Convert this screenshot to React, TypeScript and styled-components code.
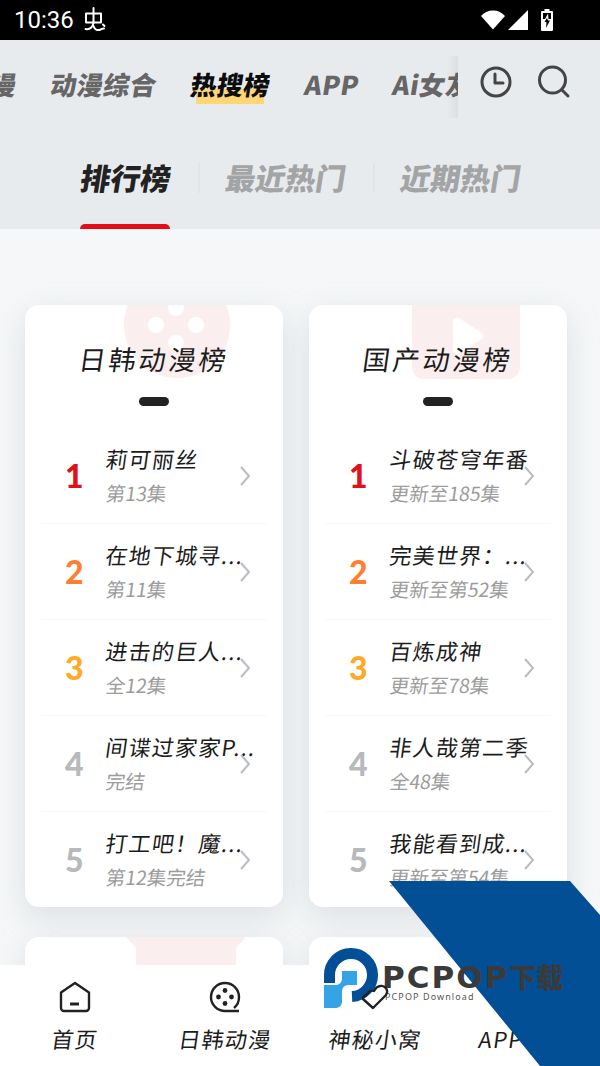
import React from "react";
import styled, { createGlobalStyle, css } from "styled-components";

const Global = createGlobalStyle`
  html, body { margin: 0; padding: 0; background: #f5f7f8; }
  * { box-sizing: border-box; }
`;

const FONT = `"Noto Sans CJK SC", "Noto Sans", sans-serif`;

const slant = (deg: number) => css`
  transform: skewX(-${deg}deg);
`;

const Page = styled.div`
  position: relative;
  width: 600px;
  height: 1066px;
  overflow: hidden;
  display: flex;
  flex-direction: column;
  font-family: ${FONT};
  background: #f5f7f8;
`;

const StatusBar = styled.div`
  height: 40px;
  flex: none;
  background: #000;
  color: #fff;
  display: flex;
  align-items: center;
  padding: 0 47px 0 14px;
  justify-content: space-between;
`;
const Clock = styled.div`
  display: flex;
  align-items: center;
  gap: 10px;
  font-family: Roboto, sans-serif;
  font-size: 24px;
`;
const StatusIcons = styled.div`
  display: flex;
  align-items: center;
  gap: 3px;
  margin-top: -1px;
`;
const BatteryIcon = styled.svg`
  margin-left: 10px;
`;

const Header = styled.header`
  height: 189px;
  flex: none;
  background: #e8ebee;
  display: flex;
  flex-direction: column;
`;
const TopRow = styled.div`
  display: flex;
  height: 84px;
  margin-top: 4px;
`;
const TopStrip = styled.div`
  width: 458px;
  flex: none;
  overflow: hidden;
  display: flex;
  align-items: center;
  gap: 34px;
  padding-bottom: 4px;
`;
const TopTab = styled.span<{ $active?: boolean; $first?: boolean }>`
  position: relative;
  flex: none;
  font-size: 26px;
  line-height: 36px;
  letter-spacing: 0.5px;
  font-weight: 900;
  color: ${(p) => (p.$active ? "#0c0c0c" : "#666")};
  margin-left: ${(p) => (p.$first ? "-36px" : "0")};
  &::before {
    content: "";
    display: ${(p) => (p.$active ? "block" : "none")};
    position: absolute;
    left: 5px;
    right: 7px;
    bottom: -2px;
    height: 15px;
    background: #fed673;
  }
`;
const TabLabel = styled.span`
  position: relative;
  display: inline-block;
  ${slant(9)}
`;
const TopIcons = styled.div`
  flex: 1;
  position: relative;
  display: flex;
  align-items: center;
  gap: 24px;
  padding: 0 0 8px 21px;
  &::before {
    content: "";
    position: absolute;
    left: -12px;
    top: 12px;
    bottom: 10px;
    width: 12px;
    background: linear-gradient(to right, rgba(0, 0, 0, 0), rgba(0, 0, 0, 0.05));
  }
`;

const SubRow = styled.div`
  flex: 1;
  display: flex;
  align-items: flex-start;
  padding: 26px 0 0 81px;
`;
const SubTab = styled.div`
  position: relative;
  flex: none;
  font-size: 30px;
  line-height: 46px;
  font-weight: 900;
  color: #a3a4a5;
`;
const SubLabel = styled.span`
  display: inline-block;
  ${slant(9)}
`;
const SubTabActive = styled(SubTab)`
  color: #222;
  &::after {
    content: "";
    position: absolute;
    left: -1px;
    right: 1px;
    top: 70px;
    height: 5px;
    border-radius: 6px 6px 0 0;
    background: #e60c16;
  }
`;
const SubDivider = styled.i`
  flex: none;
  width: 2px;
  height: 30px;
  margin: 9px 26px 0 27px;
  background: #e2e5e8;
`;

const Content = styled.main`
  flex: 1;
  min-height: 0;
  overflow: hidden;
  padding: 76px 33px 0 25px;
  display: grid;
  grid-template-columns: 258px 258px;
  grid-auto-rows: 602px;
  column-gap: 26px;
  row-gap: 30px;
`;
const Card = styled.section`
  position: relative;
  background: #fff;
  border-radius: 14px;
  box-shadow: 0 10px 30px rgba(180, 187, 194, 0.38);
  overflow: hidden;
  padding: 0 16px;
`;
const CardDecor = styled.svg<{ $left: number }>`
  position: absolute;
  left: ${(p) => p.$left}px;
  top: 0;
`;
const CardTitle = styled.h2`
  position: relative;
  margin: 0;
  padding: 34px 0 0 5px;
  height: 74px;
  text-align: center;
  font-size: 27px;
  line-height: 40px;
  font-weight: 400;
  letter-spacing: 3px;
  color: #1c1c1c;
  ${slant(8)}
`;
const TitleDash = styled.div`
  position: relative;
  width: 30px;
  height: 9px;
  margin: 18px auto 22px;
  border-radius: 5px;
  background: #222;
`;
const Row = styled.div<{ $last?: boolean }>`
  display: flex;
  align-items: center;
  height: 96px;
  border-bottom: ${(p) => (p.$last ? "none" : "1px solid #f7f8f8")};
  position: relative;
`;
const Rank = styled.div<{ $color: string }>`
  width: 65px;
  flex: none;
  padding-left: 24px;
  font-family: Lato, sans-serif;
  font-size: 32px;
  font-weight: 900;
  line-height: 36px;
  color: ${(p) => p.$color};
`;
const RowText = styled.div`
  width: 155px;
  flex: none;
  padding-bottom: 3px;
`;
const Name = styled.div`
  font-size: 22px;
  line-height: 32px;
  font-weight: 400;
  letter-spacing: 1.2px;
  color: #1c1c1c;
  white-space: nowrap;
  transform-origin: left center;
  ${slant(8)}
`;
const Sub = styled.div`
  margin-top: 5px;
  font-size: 19.5px;
  line-height: 28px;
  color: #9c9c9c;
  white-space: nowrap;
  transform-origin: left center;
  ${slant(8)}
`;
const Chevron = styled.svg`
  position: absolute;
  right: 16px;
  top: 38px;
`;

const BottomNav = styled.nav`
  height: 101px;
  flex: none;
  position: relative;
  background: #fff;
  display: grid;
  grid-template-columns: repeat(4, 150px);
`;
const NavItem = styled.div`
  display: flex;
  flex-direction: column;
  align-items: center;
  padding-top: 16px;
  gap: 9px;
`;
const NavIcon = styled.svg`
  display: block;
  position: relative;
  z-index: 2;
`;
const NavLabel = styled.span<{ $pad?: number }>`
  display: inline-block;
  font-size: 22px;
  line-height: 32px;
  font-weight: 400;
  letter-spacing: 1.2px;
  color: #1c1c1c;
  margin-right: ${(p) => p.$pad ?? 0}px;
  ${slant(8)}
`;

const Watermark = styled.div`
  position: absolute;
  z-index: 1;
  left: 320px;
  top: 881px;
  width: 280px;
  height: 185px;
  pointer-events: none;
`;
const WatermarkBand = styled.svg`
  position: absolute;
  left: 0;
  top: 0;
`;
const WatermarkLogo = styled.svg`
  position: absolute;
  left: 4px;
  top: 67px;
`;
const WatermarkName = styled.div`
  position: absolute;
  left: 62px;
  top: 78px;
  font-family: "DejaVu Sans", sans-serif;
  font-weight: 700;
  font-size: 31px;
  line-height: 36px;
  letter-spacing: 2px;
  color: #3a3a3a;
  white-space: nowrap;
`;
const WatermarkCjk = styled.span`
  font-family: "Noto Sans CJK SC", sans-serif;
  font-weight: 900;
  font-size: 27px;
  letter-spacing: 0;
`;
const WatermarkSub = styled.div`
  position: absolute;
  left: 65px;
  top: 110px;
  font-family: "Noto Sans", sans-serif;
  font-size: 9px;
  line-height: 12px;
  letter-spacing: 1.1px;
  color: #555;
  white-space: nowrap;
`;

const RANK_COLORS = ["#e2101a", "#ff7f32", "#ffa928", "#b8b9ba", "#b8b9ba"];

const CARDS = [
  {
    title: "日韩动漫榜",
    decor: "reel",
    rows: [
      ["莉可丽丝", "第13集"],
      ["在地下城寻...", "第11集"],
      ["进击的巨人...", "全12集"],
      ["间谍过家家P...", "完结"],
      ["打工吧！魔...", "第12集完结"],
    ],
  },
  {
    title: "国产动漫榜",
    decor: "play",
    rows: [
      ["斗破苍穹年番", "更新至185集"],
      ["完美世界：...", "更新至第52集"],
      ["百炼成神", "更新至78集"],
      ["非人哉第二季", "全48集"],
      ["我能看到成...", "更新至第54集"],
    ],
  },
  { title: "", decor: "tv", rows: [] },
  { title: "", decor: "none", rows: [] },
];

function Decor({ kind }: { kind: string }) {
  if (kind === "reel")
    return (
      <CardDecor $left={99} width="106" height="74" viewBox="0 0 106 74">
        <circle cx="53" cy="20" r="53" fill="#fbeeee" />
        <g fill="#fff">
          <circle cx="52" cy="3" r="8" />
          <circle cx="32" cy="20" r="8" />
          <circle cx="72" cy="20" r="8" />
          <circle cx="52" cy="38" r="8" />
        </g>
      </CardDecor>
    );
  if (kind === "play")
    return (
      <CardDecor $left={103} width="108" height="74" viewBox="0 0 108 74">
        <path d="M0 0H108V62a12 12 0 0 1-12 12H12A12 12 0 0 1 0 62Z" fill="#fbeeee" />
        <path d="M41 16a4 4 0 0 1 6-3l23 15a4 4 0 0 1 0 6L47 48a4 4 0 0 1-6-3Z" fill="#fff" />
      </CardDecor>
    );
  if (kind === "tv")
    return (
      <CardDecor $left={101} width="120" height="30" viewBox="0 0 120 30">
        <path d="M0 0H120L110 11V30H10V11Z" fill="#fbeeee" />
      </CardDecor>
    );
  return null;
}

const Ico = { fill: "none", stroke: "#222", strokeWidth: 2.4 };

export default function App() {
  return (
    <Page>
      <Global />
      <StatusBar>
        <Clock>
          10:36
          <svg width="22" height="26" viewBox="0 0 22 26" fill="none" stroke="#fff" strokeWidth="2" strokeLinecap="round" strokeLinejoin="round">
            <path d="M2 6.500h15v9H2Z" />
            <path d="M9.500 1V15.500" />
            <path d="M9.500 15.500C9 20 6 23 1.500 22" />
            <path d="M9.500 19c1 3 3 4.500 5.500 4s3-2 5-1.500" />
            <path d="M19 17.500l1.500 1.500" />
          </svg>
        </Clock>
        <StatusIcons>
          <svg width="24" height="20" viewBox="0 0 24 20">
            <path d="M0 6C3 2.500 7 .5 12 .5S21 2.500 24 6L12 19.500Z" fill="#fff" />
          </svg>
          <svg width="20" height="20" viewBox="0 0 20 20">
            <path d="M20 0V20H0Z" fill="#fff" />
          </svg>
          <BatteryIcon width="12" height="22" viewBox="0 0 12 22">
            <path d="M3.500 0h5v2H11a1 1 0 0 1 1 1v18a1 1 0 0 1-1 1H1a1 1 0 0 1-1-1V3a1 1 0 0 1 1-1h2.500Z" fill="#fff" />
            <path d="M2 4h8v6H2Z" fill="#000" />
            <path d="M7 4.500L4 10h3.500Z" fill="#fff" />
            <path d="M6 9L3.500 13H5.500L5 19 9 11.500H7Z" fill="#000" />
          </BatteryIcon>
        </StatusIcons>
      </StatusBar>
      <Header>
        <TopRow>
          <TopStrip>
            <TopTab $first><TabLabel>动漫</TabLabel></TopTab>
            <TopTab><TabLabel>动漫综合</TabLabel></TopTab>
            <TopTab $active><TabLabel>热搜榜</TabLabel></TopTab>
            <TopTab><TabLabel>APP</TabLabel></TopTab>
            <TopTab><TabLabel>Ai女友</TabLabel></TopTab>
          </TopStrip>
          <TopIcons>
            <svg width="34" height="34" viewBox="0 0 34 34" fill="none" stroke="#444" strokeWidth="3" strokeLinecap="round" strokeLinejoin="round">
              <circle cx="17" cy="17" r="14" />
              <path d="M16 9v9h8" />
            </svg>
            <svg width="34" height="34" viewBox="0 0 34 34" fill="none" stroke="#444" strokeWidth="3" strokeLinecap="round">
              <circle cx="15.500" cy="15" r="13" />
              <path d="M25 25l6 6" />
            </svg>
          </TopIcons>
        </TopRow>
        <SubRow>
          <SubTabActive><SubLabel>排行榜</SubLabel></SubTabActive>
          <SubDivider />
          <SubTab><SubLabel>最近热门</SubLabel></SubTab>
          <SubDivider />
          <SubTab><SubLabel>近期热门</SubLabel></SubTab>
        </SubRow>
      </Header>
      <Content>
        {CARDS.map((c, i) => (
          <Card key={i}>
            <Decor kind={c.decor} />
            <CardTitle>{c.title}</CardTitle>
            {c.title && <TitleDash />}
            {c.rows.map(([n, s], j) => (
              <Row key={j} $last={j === 4}>
                <Rank $color={RANK_COLORS[j]}>{j + 1}</Rank>
                <RowText>
                  <Name>{n}</Name>
                  <Sub>{s}</Sub>
                </RowText>
                <Chevron width="12" height="20" viewBox="0 0 12 20" fill="none" stroke="#b9bcc2" strokeWidth="2">
                  <path d="M2 1l8 9-8 9" />
                </Chevron>
              </Row>
            ))}
          </Card>
        ))}
      </Content>
      <BottomNav>
        <NavItem>
          <NavIcon width="32" height="32" viewBox="0 0 32 32" {...Ico} strokeLinejoin="round">
            <path d="M2 11.500L16 2l14 9.500V27a3 3 0 0 1-3 3H5a3 3 0 0 1-3-3Z" />
            <path d="M11 23h9" strokeWidth="3" />
          </NavIcon>
          <NavLabel>首页</NavLabel>
        </NavItem>
        <NavItem>
          <NavIcon width="32" height="32" viewBox="0 0 32 32" {...Ico}>
            <path d="M30 30H16A14 14 0 1 1 30 16a14 14 0 0 1-5 11" />
            <g fill="#222" stroke="none">
              <circle cx="16" cy="9.500" r="2.400" />
              <circle cx="9.500" cy="16" r="2.400" />
              <circle cx="22.500" cy="16" r="2.400" />
              <circle cx="16" cy="22.500" r="2.400" />
            </g>
          </NavIcon>
          <NavLabel>日韩动漫</NavLabel>
        </NavItem>
        <NavItem>
          <NavIcon width="32" height="32" viewBox="0 0 32 32" {...Ico} strokeLinejoin="round">
            <path d="M4 18l10 9 13-13c3-5-1-10-6-9-3 .5-5 3-6 5-2-1-5 0-7 3l-4 3.500Z" />
          </NavIcon>
          <NavLabel>神秘小窝</NavLabel>
        </NavItem>
        <NavItem>
          <NavIcon width="32" height="32" viewBox="0 0 32 32" />
          <NavLabel $pad={48}>APP</NavLabel>
        </NavItem>
      </BottomNav>
      <Watermark>
        <WatermarkBand width="280" height="185" viewBox="0 0 280 185">
          <path d="M69 0H250L280 34V185H220Z" fill="#034f96" />
        </WatermarkBand>
        <WatermarkLogo width="56" height="62" viewBox="0 0 56 62">
          <path d="M5.500 35V27A21.500 21.500 0 1 1 28 48.500" fill="none" stroke="#034f96" strokeWidth="11" />
          <path d="M18 23H33V37H24a6 6 0 0 0-6 6V54a6 6 0 0 1-6 6H0V37H12a6 6 0 0 0 6-6Z" fill="#35a4e6" />
        </WatermarkLogo>
        <WatermarkName>PCPOP<WatermarkCjk>下载</WatermarkCjk></WatermarkName>
        <WatermarkSub>PCPOP Download</WatermarkSub>
      </Watermark>
    </Page>
  );
}
